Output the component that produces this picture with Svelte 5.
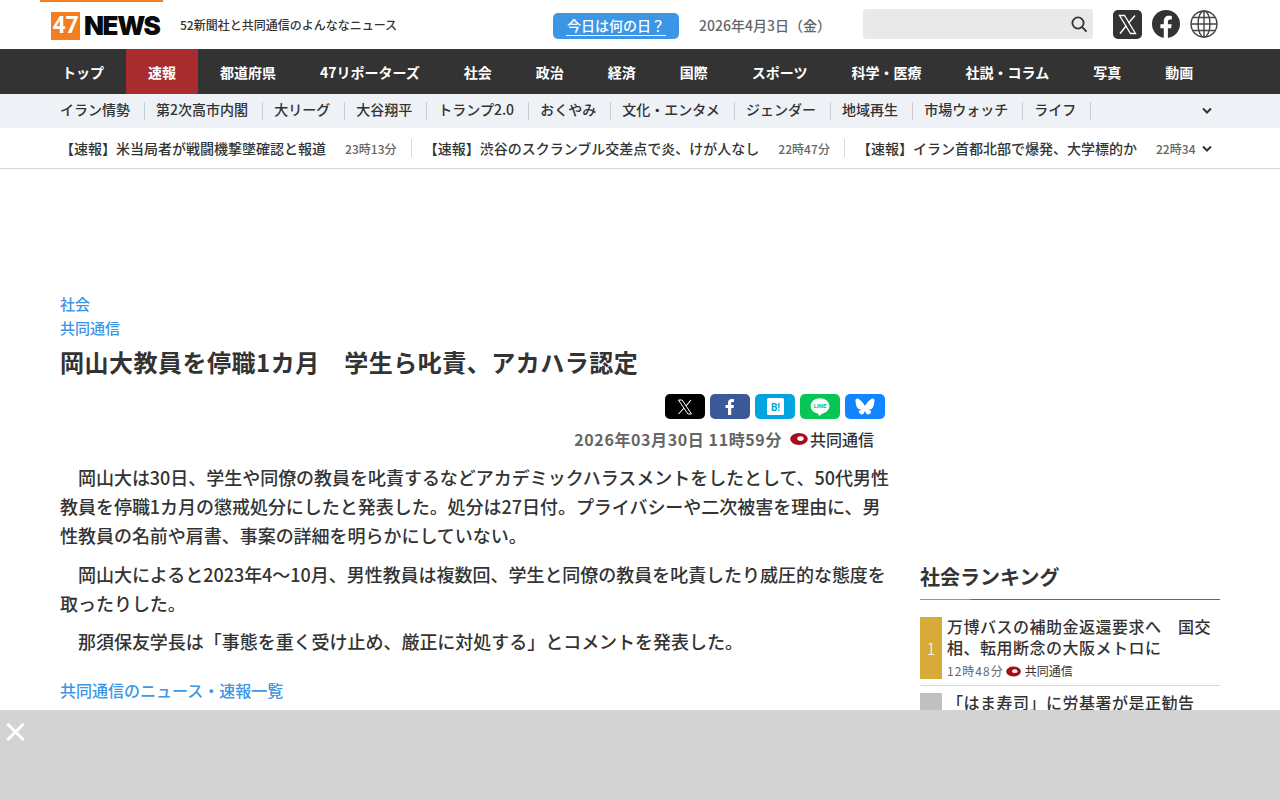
<script>
  const nav = ['トップ','速報','都道府県','47リポーターズ','社会','政治','経済','国際','スポーツ','科学・医療','社説・コラム','写真','動画'];
  const sub = ['イラン情勢','第2次高市内閣','大リーグ','大谷翔平','トランプ2.0','おくやみ','文化・エンタメ','ジェンダー','地域再生','市場ウォッチ','ライフ'];
  const ticker = [
    ['【速報】米当局者が戦闘機撃墜確認と報道','23時13分'],
    ['【速報】渋谷のスクランブル交差点で炎、けが人なし','22時47分'],
    ['【速報】イラン首都北部で爆発、大学標的か','22時34']
  ];
</script>

{#snippet kyodo(cls)}
  <svg class={cls} viewBox="0 0 18 12" aria-hidden="true"><ellipse cx="9" cy="6" rx="8.8" ry="6" fill="#a50d1c"/><ellipse cx="10.5" cy="5.6" rx="3.2" ry="2.3" fill="#fff"/></svg>
{/snippet}

<div class="page">
  <header class="head">
    <div class="logo-wrap">
      <div class="logo"><span class="l47">47</span><span class="lnews">NEWS</span></div>
    </div>
    <p class="tag">52新聞社と共同通信のよんななニュース</p>
    <a class="today"><span>今日は何の日？</span></a>
    <span class="date">2026年4月3日（金）</span>
    <div class="search">
      <svg viewBox="0 0 18 18" width="18" height="18" fill="none" stroke="#333" stroke-width="1.8"><circle cx="8" cy="8" r="5.6"/><path d="M12.2 12.2 16 16" stroke-linecap="round"/></svg>
    </div>
    <div class="socials">
      <svg width="29" height="29" viewBox="0 0 29 29"><rect width="29" height="29" rx="5" fill="#333"/><path d="M6.5 5.5h5l11 18h-5z" fill="none" stroke="#fff" stroke-width="1.3"/><path d="M22 5.5 15.5 13M13.5 15.5 7 23.5" stroke="#fff" stroke-width="1.5"/></svg>
      <svg width="28" height="28" viewBox="0 0 28 28"><circle cx="14" cy="14" r="14" fill="#333"/><path d="M11.8 28V18.2H8.4v-4h3.4v-3c0-3.5 2-5.4 5.2-5.4 1.5 0 2.8.2 2.8.2v3.5h-1.7c-1.7 0-2.2 1-2.2 2.1v2.6h3.8l-.6 4h-3.2V28z" fill="#fff"/></svg>
      <svg width="28" height="28" viewBox="0 0 28 28" fill="none" stroke="#444" stroke-width="1.4"><circle cx="14" cy="14" r="13"/><ellipse cx="14" cy="14" rx="6" ry="13"/><path d="M14 1v26M1 14h26M3 7.500h22M3 20.500h22"/></svg>
    </div>
  </header>

  <nav class="nav">
    {#each nav as n, i}
      <a class:on={i === 1}>{n}</a>
    {/each}
  </nav>

  <div class="sub">
    {#each sub as s}
      <a>{s}</a>
    {/each}
    <svg class="chev" width="12" height="8" viewBox="0 0 12 8" fill="none" stroke="#333" stroke-width="2"><path d="M2 1.500 6 5.500l4-4"/></svg>
  </div>

  <div class="ticker">
    {#each ticker as t, i}
      <div class="tick" class:last={i === 2}>
        <span class="tt">{t[0]}</span><span class="tm">{t[1]}</span>
      </div>
    {/each}
    <svg class="chev2" width="12" height="8" viewBox="0 0 12 8" fill="none" stroke="#333" stroke-width="2"><path d="M2 1.500 6 5.500l4-4"/></svg>
  </div>

  <main class="main">
    <article class="article">
      <a class="cat">社会</a>
      <a class="cat">共同通信</a>
      <h1>岡山大教員を停職1カ月　学生ら叱責、アカハラ認定</h1>
      <div class="share">
        <span class="sb x"><svg width="16" height="16" viewBox="0 0 16 16"><path d="M1.500 1h3.600l9.400 14h-3.600z" fill="none" stroke="#fff" stroke-width="1"/><path d="M14 1 9 7M7 9l-5.500 6" stroke="#fff" stroke-width="1.100"/></svg></span>
        <span class="sb fb"><svg width="10" height="16" viewBox="0 0 10 16"><path d="M3 16V9H.5V6H3V4c0-2.500 1.400-4 3.800-4H9v3H7.500C6.500 3 6.200 3.500 6.200 4.300V6H9l-.5 3H6.200v7z" fill="#fff"/></svg></span>
        <span class="sb hb"><svg width="17" height="17" viewBox="0 0 17 17"><rect width="17" height="17" rx="1.500" fill="#fff"/><text x="8.500" y="12.500" text-anchor="middle" class="hbt">B!</text></svg></span>
        <span class="sb ln"><svg width="20" height="18" viewBox="0 0 20 18"><ellipse cx="10" cy="8" rx="9.500" ry="7.800" fill="#fff"/><path d="M8 15l1 3 4-3z" fill="#fff"/><text x="10" y="10.300" text-anchor="middle" class="lnt">LINE</text></svg></span>
        <span class="sb bs"><svg width="20" height="18" viewBox="0 0 20 18"><path d="M10 8C9 6 6.200 2.400 3.800 1 1.800 0 .5.500.5 3c0 1.500 1 5.500 1.600 6.500.8 1.800 3 2 5 1.700-3.300.6-4 2.500-2.300 4.300 3 3 4.500-.8 5.200-2.500.7 1.700 2.200 5.500 5.200 2.500 1.700-1.800 1-3.700-2.300-4.300 2 .3 4.200.1 5-1.700.6-1 1.600-5 1.600-6.500 0-2.500-1.300-3-3.300-2C13.800 2.400 11 6 10 8z" fill="#fff"/></svg></span>
      </div>
      <div class="meta">
        <span class="when">2026年03月30日 11時59分</span>
        {@render kyodo('kd')}
        <span class="src">共同通信</span>
      </div>
      <div class="body">
        <p>　岡山大は30日、学生や同僚の教員を叱責するなどアカデミックハラスメントをしたとして、50代男性教員を停職1カ月の懲戒処分にしたと発表した。処分は27日付。プライバシーや二次被害を理由に、男性教員の名前や肩書、事案の詳細を明らかにしていない。</p>
        <p>　岡山大によると2023年4～10月、男性教員は複数回、学生と同僚の教員を叱責したり威圧的な態度を取ったりした。</p>
        <p>　那須保友学長は「事態を重く受け止め、厳正に対処する」とコメントを発表した。</p>
      </div>
      <a class="more">共同通信のニュース・速報一覧</a>
    </article>

    <aside class="side">
      <h2>社会ランキング</h2>
      <div class="rank">
        <span class="no gold">1</span>
        <div class="ri">
          <div class="rt">万博バスの補助金返還要求へ　国交相、転用断念の大阪メトロに</div>
          <div class="rm"><span>12時48分</span>{@render kyodo('kds')}<span class="rs">共同通信</span></div>
        </div>
      </div>
      <div class="rank second">
        <span class="no"></span>
        <div class="ri">
          <div class="rt">「はま寿司」に労基署が是正勧告</div>
        </div>
      </div>
    </aside>
  </main>

  <div class="overlay"><span class="close">×</span></div>
</div>

<style>
  :global(body) {
    margin: 0;
    background: #fff;
    overflow: hidden;
  }
  .page {
    height: 800px;
    overflow: hidden;
    font-family: "Noto Sans CJK JP", "Noto Sans", sans-serif;
    color: #333;
    font-weight: 700;
  }
  .head {
    height: 49px;
    display: flex;
    align-items: center;
    box-sizing: border-box;
    padding-left: 40px;
    position: relative;
  }
  .logo-wrap {
    height: 49px;
    border-top: 2px solid #f47d20;
    box-sizing: border-box;
    padding: 10px 0 0 11px;
    width: 123px;
  }
  .logo {
    display: flex;
    align-items: center;
    gap: 4px;
  }
  .l47 {
    width: 29px;
    height: 28px;
    background: #f47d20;
    color: #fff;
    font: 700 23px/28px "Roboto", sans-serif;
    text-align: center;
    letter-spacing: -0.3px;
    flex: none;
  }
  .lnews {
    font: 900 26px/28px "Inter", sans-serif;
    color: #0a0a0a;
    display: inline-block;
    white-space: nowrap;
    letter-spacing: -1.4px;
  }
  .tag {
    margin: 0 0 0 17px;
    font-size: 12px;
    font-weight: 500;
    width: 373px;
    white-space: nowrap;
    line-height: 20px;
  }
  .today {
    width: 126px;
    height: 26px;
    background: #3b96e6;
    border-radius: 5px;
    color: #fff;
    font-size: 14px;
    display: flex;
    justify-content: center;
    align-items: center;
    font-weight: 500;
    margin-top: 3px;
  }
  .today span {
    border-bottom: 1px solid #fff;
    line-height: 19px;
    padding: 0 1px;
  }
  .date {
    margin-left: 20px;
    font-size: 14px;
    font-weight: 500;
    color: #666;
    width: 164px;
    white-space: nowrap;
  }
  .search {
    width: 230px;
    height: 30px;
    background: #e9e9e9;
    border-radius: 3px;
    display: flex;
    justify-content: flex-end;
    align-items: center;
    padding-right: 5px;
    box-sizing: border-box;
    margin-top: -1px;
  }
  .socials {
    display: flex;
    align-items: center;
    gap: 10px;
    margin-left: 20px;
    margin-top: -1px;
  }
  .nav {
    height: 45px;
    background: #333;
    display: flex;
    padding-left: 40px;
  }
  .nav a {
    padding: 0 22px;
    line-height: 46px;
    color: #fff;
    font-size: 14px;
    font-weight: 700;
    white-space: nowrap;
  }
  .nav a.on {
    background: #a92d2f;
  }
  .sub {
    height: 34px;
    background: #eef1f6;
    display: flex;
    align-items: center;
    padding: 0 0 0 60px;
    position: relative;
    font-size: 14px;
    font-weight: 500;
  }
  .sub a {
    padding: 0 14px 0 0;
    margin-right: 11.1px;
    border-right: 1px solid #c9ccd0;
    height: 18px;
    line-height: 15px;
    white-space: nowrap;
  }
  .chev {
    position: absolute;
    left: 1201px;
    top: 13px;
  }
  .ticker {
    height: 41px;
    box-sizing: border-box;
    border-bottom: 1px solid #d6d6d6;
    display: flex;
    align-items: center;
    padding-left: 60px;
    position: relative;
    overflow: hidden;
    font-weight: 500;
  }
  .tick {
    display: flex;
    align-items: center;
    height: 18px;
    font-size: 14px;
    white-space: nowrap;
    padding-right: 14px;
    margin-right: 12px;
    border-right: 1px solid #d6d6d6;
  }
  .tick.last {
    border: 0;
    margin: 0;
    padding: 0;
  }
  .tm {
    font-size: 12px;
    color: #666;
    margin-left: 19px;
    letter-spacing: .05px;
  }
  .chev2 {
    position: absolute;
    left: 1201px;
    top: 17px;
  }
  .main {
    display: flex;
    padding: 123px 60px 0;
    gap: 28px;
    align-items: flex-start;
  }
  .article {
    width: 832px;
    flex: none;
  }
  .cat {
    display: block;
    color: #3b96e6;
    font-size: 15px;
    line-height: 24px;
    font-weight: 500;
  }
  h1 {
    margin: 4px 0 0;
    font-size: 24px;
    line-height: 36px;
    font-weight: 700;
    letter-spacing: .5px;
    color: #333;
  }
  .share {
    display: flex;
    justify-content: flex-end;
    gap: 5px;
    margin: 14px 7px 0 0;
  }
  .sb {
    width: 40px;
    height: 25px;
    border-radius: 5px;
    display: flex;
    align-items: center;
    justify-content: center;
  }
  .x { background: #000; }
  .fb { background: #3b5998; }
  .hb { background: #00a4de; }
  .ln { background: #06c755; }
  .bs { background: #1185fe; }
  .hbt { font: 700 10px "Roboto", sans-serif; fill: #00a4de; }
  .lnt { font: 700 6px "Roboto", sans-serif; fill: #06c755; }
  .meta {
    display: flex;
    justify-content: flex-end;
    align-items: center;
    height: 24px;
    margin-top: 8px;
    padding-right: 18px;
    font-size: 16px;
    font-weight: 500;
  }
  .when {
    color: #666;
    font-weight: 700;
    letter-spacing: .6px;
  }
  :global(.kd) {
    width: 18px;
    height: 12px;
    margin: 0 2px 0 8px;
  }
  .src { font-size: 16px; }
  .body {
    margin-top: 12px;
  }
  .body p {
    margin: 0 0 9.5px;
    font-size: 18px;
    line-height: 29px;
    font-weight: 500;
    letter-spacing: -.03px;
    color: #333;
  }
  .more {
    display: block;
    margin-top: 21.5px;
    color: #3b96e6;
    font-size: 16px;
    line-height: 24px;
    font-weight: 500;
  }
  .side {
    width: 300px;
    flex: none;
    margin-top: 270px;
  }
  h2 {
    margin: 0;
    font-size: 20px;
    line-height: 30px;
    font-weight: 700;
    padding-bottom: 7px;
    border-bottom: 1px solid #666;
    position: relative;
  }
  h2::after {
    content: "";
    position: absolute;
    left: 0;
    bottom: -1px;
    width: 51px;
    height: 1px;
    background: #f47d20;
  }
  .rank {
    display: flex;
    gap: 5px;
    margin-top: 17px;
    padding-bottom: 6px;
    border-bottom: 1px solid #d6d6d6;
  }
  .rank.second {
    margin-top: 7px;
    border: 0;
  }
  .no {
    width: 22px;
    flex: none;
    background: #c0c0c0;
    color: #fff;
    font-size: 16px;
    font-weight: 300;
    display: flex;
    align-items: center;
    justify-content: center;
  }
  .no.gold {
    background: #d6ab38;
    height: 62px;
  }
  .second .no { height: 62px; }
  .ri { flex: 1; margin-top: -1px; }
  .rt {
    font-size: 16px;
    line-height: 21px;
    font-weight: 500;
    letter-spacing: .5px;
    color: #333;
  }
  .rm {
    display: flex;
    align-items: center;
    margin-top: 5px;
    font-size: 12px;
    line-height: 16px;
    font-weight: 400;
    color: #666;
    letter-spacing: 1px;
  }
  :global(.kds) {
    width: 15px;
    height: 11px;
    margin: 0 4px 0 2px;
  }
  .rs { color: #333; letter-spacing: 0; }
  .overlay {
    position: fixed;
    left: 0;
    right: 0;
    bottom: 0;
    height: 90px;
    background: #d3d3d3;
  }
  .close {
    position: absolute;
    left: 5px;
    top: 4px;
    width: 20px;
    text-align: center;
    color: #fff;
    font: 400 32px/34px "DejaVu Sans", sans-serif;
    margin-left: -3px;
  }
</style>
